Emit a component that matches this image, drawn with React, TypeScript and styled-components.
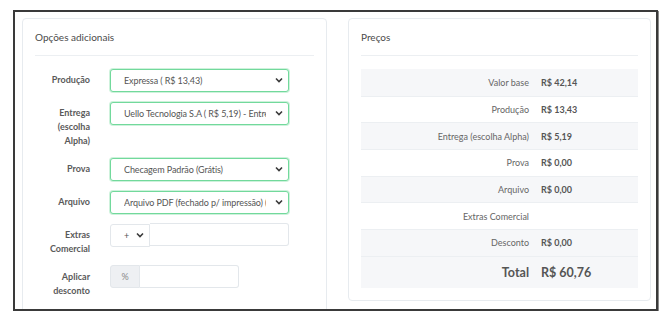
import styled, { createGlobalStyle } from 'styled-components';

const GlobalStyle = createGlobalStyle`
  body {
    margin: 0;
    background: #fff;
    font-family: Lato, "Liberation Sans", sans-serif;
  }
`;

const producaoOpts = ['Expressa ( R$ 13,43)'];
const entregaOpts = ['Uello Tecnologia S.A ( R$ 5,19) - Entrega em 1 dia útil'];
const provaOpts = ['Checagem Padrão (Grátis)'];
const arquivoOpts = ['Arquivo PDF (fechado p/ impressão) (Grátis)'];

const precos = [
  { label: 'Valor base', value: 'R$ 42,14' },
  { label: 'Produção', value: 'R$ 13,43' },
  { label: 'Entrega (escolha Alpha)', value: 'R$ 5,19' },
  { label: 'Prova', value: 'R$ 0,00' },
  { label: 'Arquivo', value: 'R$ 0,00' },
  { label: 'Extras Comercial', value: '' },
  { label: 'Desconto', value: 'R$ 0,00' },
];

const Chevron = () => (
  <svg width="8" height="6" viewBox="0 0 8 6">
    <path d="M1 1.5 L4 4.5 L7 1.5" fill="none" stroke="#3a3a3a" strokeWidth="1.6" />
  </svg>
);

const App = () => {
  return (
    <>
      <GlobalStyle />
      <Frame>
        <Card $width={305}>
          <CardTitle>Opções adicionais</CardTitle>
          <FormBody>
            <FormRow>
              <Label>Produção</Label>
              <SelectWrap>
                <Select $valid>
                  {producaoOpts.map((o) => (
                    <option key={o}>{o}</option>
                  ))}
                </Select>
                <Chevron />
              </SelectWrap>
            </FormRow>
            <FormRow>
              <Label>
                Entrega
                <br />
                (escolha
                <br />
                Alpha)
              </Label>
              <SelectWrap>
                <Select $valid>
                  {entregaOpts.map((o) => (
                    <option key={o}>{o}</option>
                  ))}
                </Select>
                <Chevron />
              </SelectWrap>
            </FormRow>
            <FormRow>
              <Label>Prova</Label>
              <SelectWrap>
                <Select $valid>
                  {provaOpts.map((o) => (
                    <option key={o}>{o}</option>
                  ))}
                </Select>
                <Chevron />
              </SelectWrap>
            </FormRow>
            <FormRow>
              <Label>Arquivo</Label>
              <SelectWrap>
                <Select $valid>
                  {arquivoOpts.map((o) => (
                    <option key={o}>{o}</option>
                  ))}
                </Select>
                <Chevron />
              </SelectWrap>
            </FormRow>
            <FormRow>
              <Label>
                Extras
                <br />
                Comercial
              </Label>
              <InputGroup $width={179}>
                <SelectWrap $small>
                  <Select $sign>
                    <option>+</option>
                    <option>-</option>
                  </Select>
                  <Chevron />
                </SelectWrap>
                <Input type="text" />
              </InputGroup>
            </FormRow>
            <FormRow>
              <Label>
                Aplicar
                <br />
                desconto
              </Label>
              <InputGroup $width={129}>
                <Addon>%</Addon>
                <Input type="text" />
              </InputGroup>
            </FormRow>
          </FormBody>
        </Card>
        <Card $width={303}>
          <CardTitle>Preços</CardTitle>
          <PriceTable>
            {precos.map((p, i) => (
              <PriceRow key={p.label} $striped={i % 2 === 0}>
                <PriceLabel>{p.label}</PriceLabel>
                <PriceValue>{p.value}</PriceValue>
              </PriceRow>
            ))}
            <PriceRow $striped $total>
              <PriceLabel>Total</PriceLabel>
              <PriceValue>R$ 60,76</PriceValue>
            </PriceRow>
          </PriceTable>
        </Card>
      </Frame>
    </>
  );
};

export default App;

const Frame = styled.div`
  box-sizing: border-box;
  margin: 10px 0 0 13px;
  width: 645px;
  height: 301px;
  border: 2px solid #3a3a3a;
  box-shadow: 1px 1px 0 #8a8a8a;
  padding: 6px 5px 0 7px;
  display: flex;
  align-items: flex-start;
  gap: 21px;
  overflow: hidden;
  background: #fff;
`;

const Card = styled.div<{ $width: number }>`
  box-sizing: border-box;
  width: ${(p) => p.$width}px;
  flex: none;
  border: 1px solid #e7ebef;
  border-radius: 4px;
  padding: 0 12px 12px;
  background: #fff;
`;

const CardTitle = styled.div`
  height: 37px;
  box-sizing: border-box;
  padding-top: 11px;
  border-bottom: 1px solid #eceff2;
  font-size: 10px;
  line-height: 14px;
  color: #4a4a4a;
`;

const FormBody = styled.div`
  padding-top: 12px;
`;

const FormRow = styled.div`
  display: grid;
  grid-template-columns: 55px 179px;
  column-gap: 20px;
  align-items: start;
  margin-bottom: 9px;
`;

const Label = styled.div`
  padding-top: 5px;
  text-align: right;
  font-size: 9px;
  line-height: 14px;
  font-weight: 700;
  color: #5a5a5a;
`;

const SelectWrap = styled.div<{ $small?: boolean }>`
  position: relative;
  width: ${(p) => (p.$small ? '40px' : '100%')};
  flex: none;

  svg {
    position: absolute;
    right: 6px;
    top: 9px;
    pointer-events: none;
  }
`;

const Select = styled.select<{ $valid?: boolean; $sign?: boolean }>`
  appearance: none;
  box-sizing: border-box;
  width: 100%;
  height: 23px;
  margin: 0;
  padding: ${(p) => (p.$sign ? '0 0 0 13px' : '0 22px 0 13px')};
  font-family: Lato, "Liberation Sans", sans-serif;
  font-size: 9px;
  letter-spacing: -0.1px;
  color: #555;
  background: #fff;
  border: 1px solid ${(p) => (p.$valid ? '#72d99c' : '#e3e7eb')};
  border-radius: ${(p) => (p.$sign ? '3px 0 0 3px' : '3px')};
  box-shadow: ${(p) => (p.$valid ? '0 0 0 1px rgba(114, 217, 156, 0.35)' : 'none')};
  outline: none;
`;

const InputGroup = styled.div<{ $width: number }>`
  display: flex;
  width: ${(p) => p.$width}px;
  height: 23px;
`;

const Input = styled.input`
  box-sizing: border-box;
  flex: 1;
  min-width: 0;
  height: 23px;
  margin: 0;
  border: 1px solid #e3e7eb;
  border-left: none;
  border-radius: 0 3px 3px 0;
  outline: none;
  font-family: Lato, "Liberation Sans", sans-serif;
  font-size: 9px;
`;

const Addon = styled.div`
  box-sizing: border-box;
  width: 30px;
  height: 23px;
  display: flex;
  align-items: center;
  justify-content: center;
  background: #eef0f3;
  border: 1px solid #e3e7eb;
  border-radius: 3px 0 0 3px;
  font-size: 9px;
  color: #888;
`;

const PriceTable = styled.div`
  margin-top: 13px;
  display: flex;
  flex-direction: column;
`;

const PriceRow = styled.div<{ $striped?: boolean; $total?: boolean }>`
  box-sizing: border-box;
  display: grid;
  grid-template-columns: 1fr 103px;
  align-items: center;
  height: ${(p) => (p.$total ? '32px' : '26.7px')};
  background: ${(p) => (p.$striped ? '#f6f7f9' : '#fff')};
  border-top: 1px solid #eceff2;
  font-size: ${(p) => (p.$total ? '12.5px' : '9px')};

  &:first-child {
    border-top: none;
  }

  & > div:first-child {
    color: ${(p) => (p.$total ? '#555' : '#666')};
    font-weight: ${(p) => (p.$total ? 700 : 400)};
  }
`;

const PriceLabel = styled.div`
  text-align: right;
  padding-right: 6px;
`;

const PriceValue = styled.div`
  padding-left: 6px;
  font-weight: 700;
  color: #555;
`;
